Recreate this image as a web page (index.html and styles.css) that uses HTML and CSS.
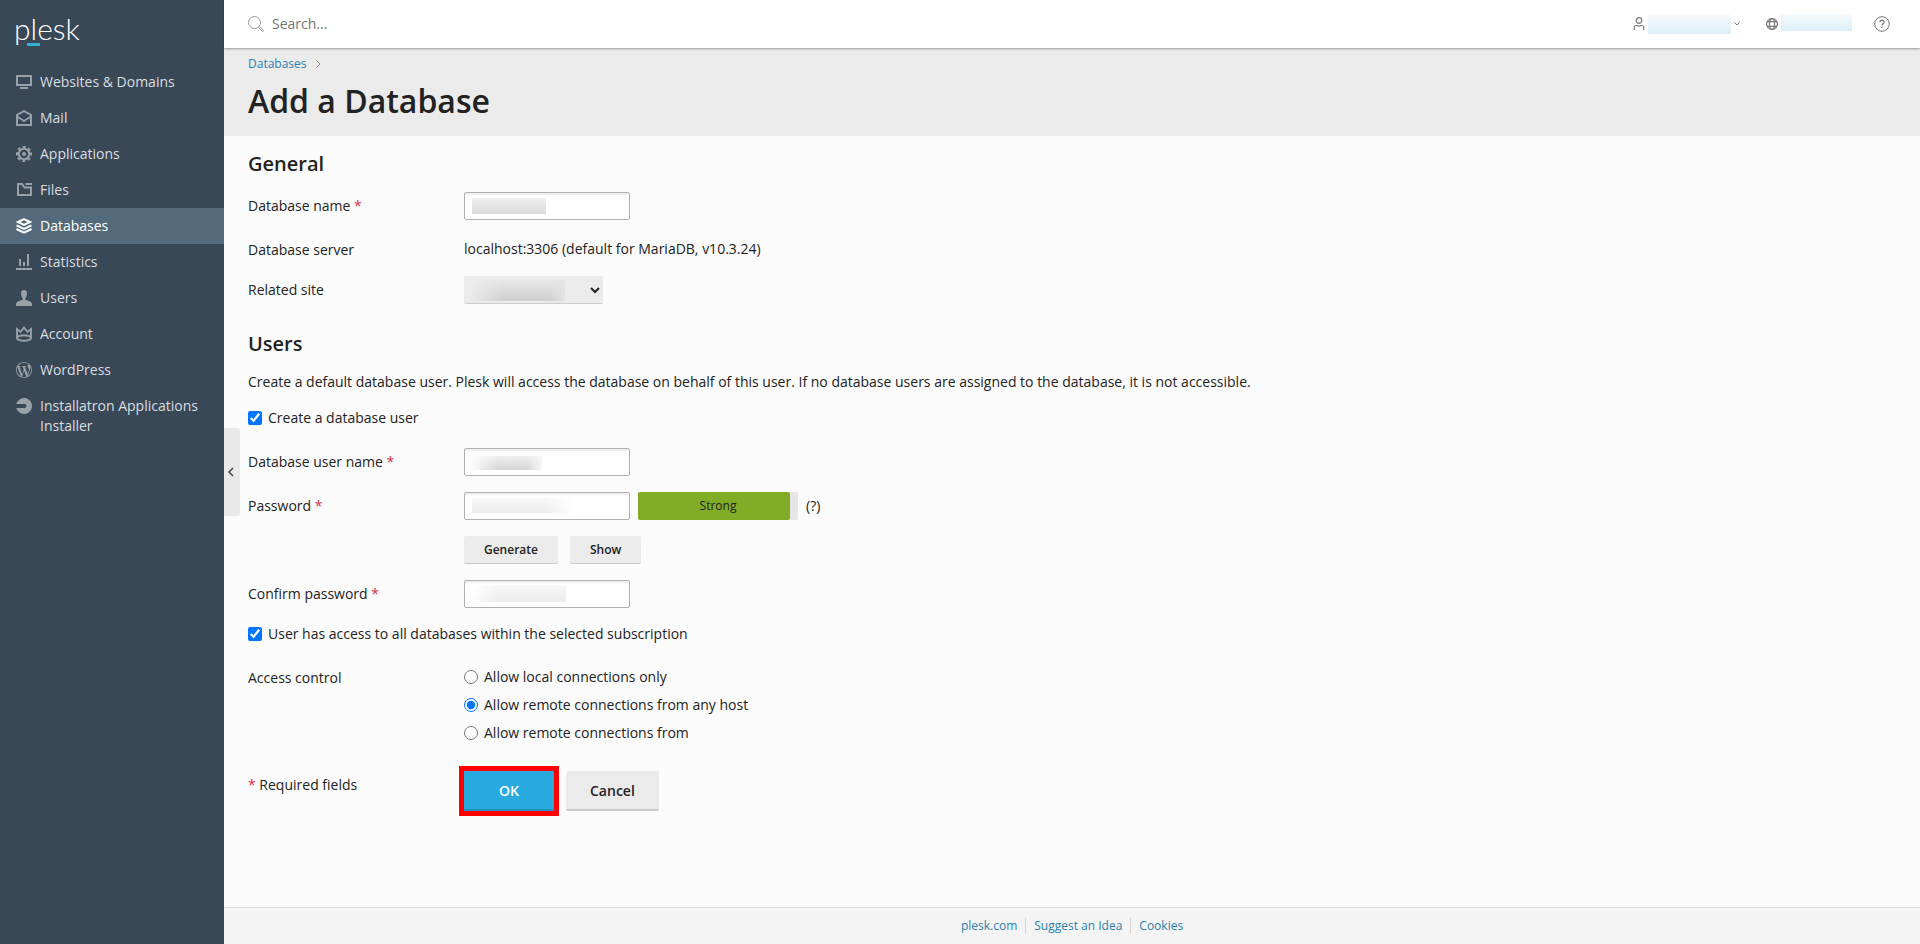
FILE: index.html
```html
<!DOCTYPE html>
<html lang="en">
<head>
<meta charset="utf-8">
<meta name="viewport" content="width=device-width, initial-scale=1">
<title>Add a Database - Plesk</title>
<link rel="stylesheet" href="styles.css">
</head>
<body>
<div class="page">
  <aside class="sidebar">
    <a class="logo" href="#">plesk</a>
    <nav class="nav">
      <a class="nav-item" href="#"><svg class="icon" viewBox="0 0 16 16" fill="none" stroke="currentColor" stroke-width="2"><path d="M1 2h14v9H1zM4 14h8"/></svg><span>Websites &amp; Domains</span></a>
      <a class="nav-item" href="#"><svg class="icon" viewBox="0 0 16 16" fill="none" stroke="currentColor" stroke-width="2"><path d="M1 15V5l7-4 7 4v10z"/><path d="M1 6.500l7 4.500 7-4.500" stroke-width="1.800"/></svg><span>Mail</span></a>
      <a class="nav-item" href="#"><svg class="icon" viewBox="0 0 16 16" fill="none" stroke="currentColor"><circle cx="8" cy="8" r="5.200" stroke-width="2"/><circle cx="8" cy="8" r="7" stroke-width="2" stroke-dasharray="3 2.498" transform="rotate(-12 8 8)"/><circle cx="8" cy="8" r="2" fill="currentColor" stroke="none"/></svg><span>Applications</span></a>
      <a class="nav-item" href="#"><svg class="icon" viewBox="0 0 16 16" fill="none" stroke="currentColor" stroke-width="2"><path d="M2 2h4l2.500 3.500H15V13H2zM9.500 2H16"/></svg><span>Files</span></a>
      <a class="nav-item active" href="#" aria-current="page"><svg class="icon" viewBox="0 0 16 16" fill="none" stroke="currentColor" stroke-width="2"><path d="M8 1.200L14 4 8 6.800 2 4zM.5 7.300L8 10.800l7.500-3.500M.5 11L8 14.700l7.500-3.700"/></svg><span>Databases</span></a>
      <a class="nav-item" href="#"><svg class="icon" viewBox="0 0 16 16" fill="none" stroke="currentColor" stroke-width="2"><path d="M0 15h16M4 5v7M8 8v4M12 0v12"/></svg><span>Statistics</span></a>
      <a class="nav-item" href="#"><svg class="icon" viewBox="0 0 16 16" fill="currentColor"><path d="M8 0c2.200 0 3 1.600 3 3.500S10.300 7 9.500 8v2c3 .6 6.500 1.500 6.500 4.500V16H0v-1.500C0 11.500 3.500 10.600 6.500 10V8C5.700 7 5 5.400 5 3.500S5.800 0 8 0z"/></svg><span>Users</span></a>
      <a class="nav-item" href="#"><svg class="icon" viewBox="0 0 16 16" fill="none" stroke="currentColor" stroke-width="1.900"><path d="M1 3v9.500c2 3 12 3 14 0V3l-3.500 3L8 1.500 4.500 6z"/><path d="M1 11.500c2.500-3 11.500-3 14 0"/></svg><span>Account</span></a>
      <a class="nav-item" href="#"><svg class="icon" viewBox="0 0 24 24" fill="currentColor"><path d="M21.469 6.825c.84 1.537 1.318 3.300 1.318 5.175 0 3.979-2.156 7.456-5.363 9.325l3.295-9.527c.615-1.540.82-2.771.82-3.864 0-.405-.026-.780-.07-1.110m-7.981.105c.647-.03 1.232-.105 1.232-.105.582-.075.514-.930-.067-.899 0 0-1.755.135-2.880.135-1.064 0-2.850-.150-2.850-.150-.585-.030-.661.855-.075.885 0 0 .540.061 1.125.090l1.680 4.605-2.370 7.080L5.354 6.900c.649-.030 1.234-.100 1.234-.100.585-.075.516-.930-.065-.896 0 0-1.746.138-2.874.138-.200 0-.438-.008-.690-.015C4.911 3.150 8.235 1.215 12 1.215c2.809 0 5.365 1.072 7.286 2.833-.046-.003-.091-.009-.141-.009-1.060 0-1.812.923-1.812 1.914 0 .890.513 1.643 1.060 2.531.411.720.890 1.643.890 2.977 0 .915-.354 1.994-.821 3.479l-1.075 3.585-3.900-11.610zM12 22.784c-1.059 0-2.081-.153-3.048-.437l3.237-9.406 3.315 9.087c.024.053.050.101.078.149-1.120.393-2.325.607-3.582.607M1.211 12c0-1.564.336-3.050.935-4.390L7.290 21.709C3.694 19.960 1.212 16.271 1.211 12M12 0C5.385 0 0 5.385 0 12s5.385 12 12 12 12-5.385 12-12S18.615 0 12 0"/></svg><span>WordPress</span></a>
      <a class="nav-item" href="#"><svg class="icon" viewBox="0 0 16 16" fill="currentColor"><path d="M.3 6A8 8 0 1 1 .3 10H8.500a2 2 0 0 0 0-4z"/></svg><span>Installatron Applications Installer</span></a>
    </nav>
    <button class="collapse" type="button" aria-label="Collapse sidebar"><svg width="6" height="10" viewBox="0 0 6 10" fill="none" stroke="currentColor" stroke-width="1.300"><path d="M5 1L1 5l4 4"/></svg></button>
  </aside>

  <div class="content">
    <header class="topbar">
      <label class="search">
        <svg class="icon" viewBox="0 0 16 16" fill="none" stroke="currentColor"><circle cx="6.500" cy="6.500" r="6"/><path d="M10.500 11.500l3.700 3.700c1 .6 1.800-.4 1.200-1.200l-3.900-3.600"/></svg>
        <input type="text" placeholder="Search..." aria-label="Search">
      </label>
      <div class="tools">
        <button class="tool tool-user" type="button" aria-label="User menu">
          <svg width="12" height="14" viewBox="0 0 12 14" fill="none" stroke="currentColor" stroke-width="1.200"><circle cx="6" cy="3.500" r="2.800"/><path d="M1.300 13v-2.500q0-2 2-2h.7q2 1.200 4 0h.7q2 0 2 2V13"/></svg>
          <span class="mask mask-user"></span>
          <svg width="6" height="4" viewBox="0 0 6 4" fill="none" stroke="currentColor"><path d="M.5.5L3 3 5.500.5"/></svg>
        </button>
        <button class="tool" type="button" aria-label="Subscription">
          <svg width="12" height="12" viewBox="0 0 12 12" fill="none" stroke="currentColor" stroke-width="1.200"><circle cx="6" cy="6" r="5.400"/><ellipse cx="6" cy="6" rx="2.600" ry="5.400"/><path d="M1 3.700h10M1 8.300h10"/></svg>
          <span class="mask mask-sub"></span>
        </button>
        <button class="tool" type="button" aria-label="Help">
          <svg class="icon" viewBox="0 0 16 16" fill="none" stroke="currentColor"><circle cx="8" cy="8" r="7.300"/><path d="M5.900 6.300c0-3 4.300-2.600 4.200-.1 0 1.500-2.100 1.500-2.100 3.300M8 10.700v1.200" stroke-width="1.200"/></svg>
        </button>
      </div>
    </header>

    <div class="heading">
      <div class="crumbs"><a href="#">Databases</a><svg width="5" height="8" viewBox="0 0 5 8" fill="none" stroke="currentColor"><path d="M.5.5L4 4 .5 7.500"/></svg></div>
      <h1>Add a Database</h1>
    </div>

    <main>
      <form class="form">
        <section class="section">
          <h2>General</h2>
          <div class="row"><label class="label" for="name">Database name <em>*</em></label><input class="text mask-a" id="name" type="text"></div>
          <div class="row"><span class="label">Database server</span><span class="value">localhost:3306 (default for MariaDB, v10.3.24)</span></div>
          <div class="row"><label class="label" for="site">Related site</label>
            <span class="select-wrap"><select class="select" id="site"><option></option></select><svg width="10" height="7" viewBox="0 0 10 7" fill="none" stroke="currentColor" stroke-width="2"><path d="M1 1l4 4 4-4"/></svg></span></div>
        </section>

        <section class="section">
          <h2>Users</h2>
          <p>Create a default database user. Plesk will access the database on behalf of this user. If no database users are assigned to the database, it is not accessible.</p>
          <label class="check"><input type="checkbox" checked>Create a database user</label>
          <div class="row"><label class="label" for="user">Database user name <em>*</em></label><input class="text mask-b" id="user" type="text"></div>
          <div class="row"><label class="label" for="pass">Password <em>*</em></label>
            <div class="controls">
              <div class="line"><input class="text mask-c" id="pass" type="password"><span class="meter"><span class="meter-fill"></span><span class="meter-text">Strong</span></span><span>(?)</span></div>
              <div class="buttons"><button class="small" type="button">Generate</button><button class="small" type="button">Show</button></div>
            </div>
          </div>
          <div class="row"><label class="label" for="confirm">Confirm password <em>*</em></label><input class="text mask-d" id="confirm" type="password"></div>
          <label class="check"><input type="checkbox" checked>User has access to all databases within the selected subscription</label>
          <div class="row" role="radiogroup" aria-labelledby="access"><span class="label" id="access">Access control</span>
            <div class="radios">
              <label><input type="radio" name="access">Allow local connections only</label>
              <label><input type="radio" name="access" checked>Allow remote connections from any host</label>
              <label><input type="radio" name="access">Allow remote connections from</label>
            </div>
          </div>
        </section>

        <div class="row"><span class="label"><em>*</em> Required fields</span>
          <div class="actions"><button class="big ok" type="button">OK</button><button class="big" type="button">Cancel</button></div>
        </div>
      </form>
    </main>

    <footer class="footer"><a href="#">plesk.com</a><a href="#">Suggest an Idea</a><a href="#">Cookies</a></footer>
  </div>
</div>
</body>
</html>
```
FILE: styles.css
```css
* { box-sizing: border-box; }
body { margin: 0; color: #222; background: #fbfbfb; font: 14px/20px "Open Sans", sans-serif; }
a { color: #2a7fb0; text-decoration: none; }
button, input, select { font: inherit; color: inherit; }
button { cursor: pointer; }
h1, h2, p { margin: 0; }
h1 { font-size: 32px; line-height: 40px; font-weight: 600; }
h2 { font-size: 20px; line-height: 24px; font-weight: 600; }
em { color: #d8304c; font-style: normal; }
svg { display: block; flex: none; }
.icon { width: 16px; height: 16px; }

.page { display: flex; min-height: 100vh; }
.sidebar { position: relative; flex: none; width: 224px; background: #394857; }
.logo { position: relative; display: block; height: 64px; padding: 11px 14px; color: #fff; font: 300 30px/34px Lato, sans-serif; }
.logo::after { content: ""; position: absolute; left: 27px; top: 43px; width: 13px; height: 3px; background: #35b1d3; }
.nav-item { display: flex; gap: 8px; padding: 8px 16px; color: #d9dde0; }
.nav-item .icon { flex: none; margin-top: 2px; color: #98a1a8; }
.nav-item.active { background: #53697c; color: #fff; }
.nav-item.active .icon { color: #fff; }
.collapse { position: absolute; left: 100%; top: calc(50vh - 44px); width: 16px; height: 88px; padding: 0 0 0 4px; border: 0; border-radius: 0 3px 3px 0; background: #e9e9e9; color: #333; }

.content { flex: 1; min-width: 0; display: flex; flex-direction: column; }
.topbar { position: relative; display: flex; align-items: center; justify-content: space-between; height: 48px; padding: 0 30px 0 24px; background: #fff; box-shadow: 0 1px 2px rgba(0, 0, 0, .35); }
.search { display: flex; align-items: center; gap: 8px; color: #999; }
.search input { width: 240px; padding: 0; border: 0; outline: 0; background: none; color: #222; }
.search input::placeholder { color: #737373; opacity: 1; }
.tools { display: flex; align-items: center; gap: 22px; color: #777; }
.tool { display: flex; align-items: center; gap: 3px; padding: 0; border: 0; background: none; }
.tool-user { margin-right: 4px; }
.mask { background: linear-gradient(#f5fafd, #dceff8); }
.mask-user { width: 83px; height: 19px; }
.mask-sub { width: 71px; height: 17px; margin-bottom: 4px; }
.heading { padding: 7px 24px 15px; background: #ebebeb; }
.crumbs { display: flex; align-items: center; gap: 9px; height: 18px; margin-bottom: 8px; color: #888; font-size: 12px; }

main { flex: 1; padding: 16px 24px; }
.section { display: flex; flex-direction: column; gap: 16px; margin-bottom: 28px; }
.row { display: flex; align-items: flex-start; }
.label { flex: none; width: 216px; padding-top: 4px; }
.value { padding-top: 3px; }
.text { width: 166px; height: 28px; padding: 2px 7px; border: 1px solid #b0b0b0; border-radius: 2px; background-color: #fff; background-repeat: no-repeat; box-shadow: inset 0 2px 0 #efefef; }
.mask-a { background-image: linear-gradient(#f0f0f0, #dadada); background-size: 74px 16px; background-position: 7px 5px; }
.mask-b { background-image: linear-gradient(90deg, #fff, transparent 40%, transparent 80%, #f6f6f6), linear-gradient(#eee, #d6d6d6); background-size: 74px 14px; background-position: 3px 7px; }
.mask-c { background-image: linear-gradient(90deg, transparent 70%, #fff), linear-gradient(#f8f8f8, #ebebeb); background-size: 102px 15px; background-position: 7px 5px; }
.mask-d { background-image: linear-gradient(90deg, #fff, transparent 30%), linear-gradient(#f8f8f8, #ebebeb); background-size: 97px 17px; background-position: 4px 4px; }
.select-wrap { position: relative; width: 139px; }
.select { display: block; width: 100%; height: 28px; padding: 0 24px 0 8px; border: 0; border-bottom: 1px solid #ccc; border-radius: 2px; appearance: none; background: linear-gradient(90deg, #ebebeb, transparent 35%, transparent 85%, #e4e4e4) 6px 4px / 95px 21px no-repeat, linear-gradient(#e8e8e8, #cecece) 6px 4px / 95px 21px no-repeat, #ebebeb; }
.select-wrap svg { position: absolute; right: 3px; top: 11px; pointer-events: none; }
.check { display: flex; align-items: center; align-self: flex-start; gap: 6px; padding-bottom: 4px; }
input[type="checkbox"], input[type="radio"] { width: 14px; height: 14px; margin: 0; accent-color: #0075ff; }
.controls { display: flex; flex-direction: column; gap: 16px; }
.line { display: flex; align-items: center; gap: 8px; }
.meter { position: relative; display: grid; width: 160px; height: 28px; border-radius: 2px; background: #e6e6e6; }
.meter-fill { grid-area: 1 / 1; width: 95%; border-radius: 2px; background: #80ad25; }
.meter-text { grid-area: 1 / 1; place-self: center; font-size: 12px; }
.buttons { display: flex; gap: 12px; }
.small, .big { border: 0; border-radius: 2px; background: #ebebeb; font-weight: 600; }
.small { height: 28px; padding: 0 20px; border-bottom: 1px solid #c8c8c8; font-size: 12px; }
.radios { display: flex; flex-direction: column; gap: 8px; padding-top: 3px; }
.radios label { display: flex; align-items: center; gap: 6px; }
.actions { display: flex; gap: 12px; }
.big { height: 40px; padding: 2px 24px 0; border-bottom: 2px solid #c8c8c8; }
.ok { min-width: 90px; border-color: #2591c0; border-radius: 0; background: #28aade; color: #fff; outline: 5px solid #f00; }
.footer { display: flex; align-items: flex-start; justify-content: center; height: 37px; padding-top: 10px; border-top: 1px solid #ddd; background: #f4f4f4; font-size: 12px; line-height: 16px; }
.footer a { padding: 0 8px; }
.footer a + a { border-left: 1px solid #d5d5d5; }
```
